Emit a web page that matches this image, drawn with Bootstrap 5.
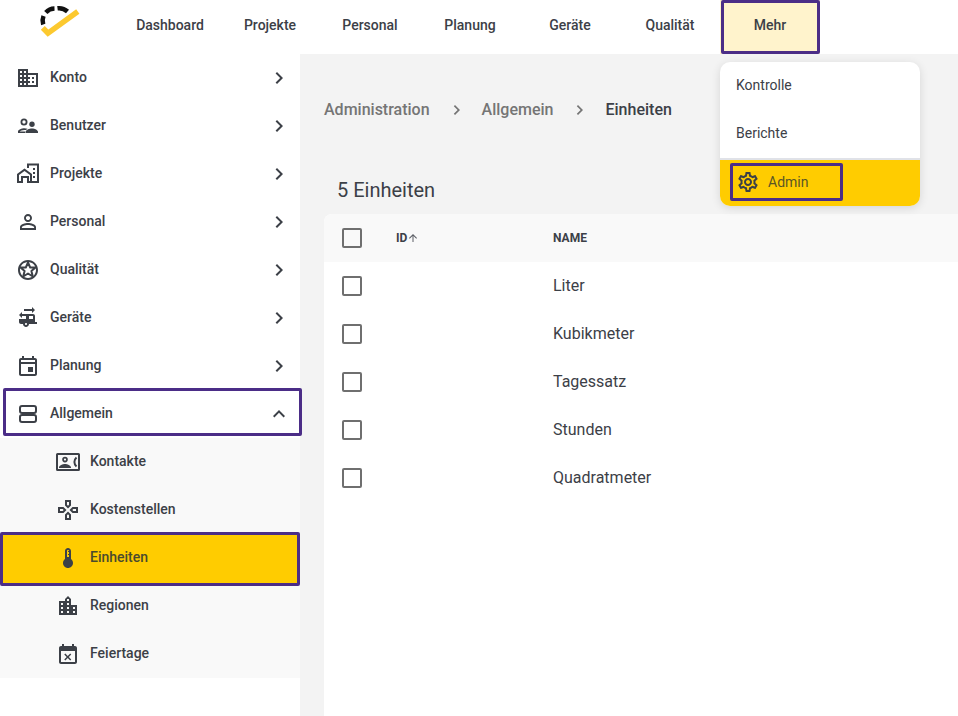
<!DOCTYPE html>
<html lang="de">
<head>
<meta charset="utf-8">
<title>Einheiten</title>
<link href="https://cdn.jsdelivr.net/npm/bootstrap@5.3.0/dist/css/bootstrap.min.css" rel="stylesheet">
<style>
html,body{height:716px;overflow:hidden}
body{font-family:Roboto,"Liberation Sans",sans-serif;color:#3c4047;background:#f3f3f3;font-size:14px}
svg.ico{fill:#3c4047;display:block;flex:none}
.topbar{height:54px;background:#fff;position:relative}
.logo-cell{width:120px;flex:none}
.top-link{width:100px;height:54px;padding-bottom:4px;font-size:14px;font-weight:500;color:#3c4047;text-decoration:none;position:relative}
.top-link.is-open{background:#fff3cc}
.top-link.is-open::after{content:"";position:absolute;left:1px;right:0;top:0;bottom:0;border:3px solid #4b2d87;border-radius:2px}
.shell{height:662px}
.side{width:300px;flex:none;background:#fff}
.side-row{height:48px;padding-left:18px;padding-right:9px;font-weight:500;font-size:14px;color:#3c4047;text-decoration:none;position:relative}
.side-row .lbl{margin-left:12px;margin-top:-2px}
.side-row .chev{margin-left:auto}
.sub-list{background:#f9f9f9}
.side-sub{padding-left:56px}
.side-sub .lbl{margin-left:10px}
.is-focus::after{content:"";position:absolute;left:3px;right:-2px;top:-2px;bottom:2px;border:3px solid #4b2d87;border-radius:2px}
.is-current::after{content:"";position:absolute;left:0;right:0;top:-2px;bottom:-4px;background:#ffcc00;border:3px solid #4b2d87;border-radius:2px}
.is-current svg,.is-current .lbl{position:relative;z-index:1}
.is-current .lbl{color:#4a4a2e}
.main-pane{flex:1;min-width:0;padding-left:24px}
.crumbs{height:110px;padding-top:2px;font-size:16px;font-weight:500;color:#757575}
.crumbs .here{color:#3c4047}
.crumb-sep{fill:#757575;margin:0 13px 0 15px;display:block;flex:none}
.count-title{height:50px;padding-left:13px;padding-top:14px;font-size:20px;font-weight:400;color:#3c4047;margin:0;line-height:24px}
.data-panel{background:#fff;border-top-left-radius:8px;height:502px}
.data-head{height:48px;background:#f9f9f9;border-top-left-radius:8px;font-size:12px;font-weight:700}
.data-row{height:48px;font-size:16px}
.box-cell{width:72px;padding-left:18px;flex:none}
.tick{width:20px;height:20px;border:2px solid #6f6f6f;border-radius:2px;display:block}
.id-cell{width:157px;flex:none}
.sort-arrow{fill:#5c5f66}
.more-menu{position:absolute;left:720px;top:62px;width:200px;background:#fff;border-radius:10px;box-shadow:0 2px 10px rgba(0,0,0,.12);z-index:5}
.more-item{height:48px;padding-left:16px;padding-bottom:2px;font-size:14px;color:#3c4047;text-decoration:none}
.more-admin{height:48px;background:#ffcc00;border-top:2px solid #e0e2e8;border-radius:0 0 10px 10px;color:#5a5526;position:relative;padding-left:16px;padding-bottom:2px;text-decoration:none;font-size:14px}
.more-admin .lbl{margin-left:8px}
.more-admin::after{content:"";position:absolute;left:10px;top:3px;width:113px;height:38px;border:3px solid #4b2d87;border-radius:2px}
.logo-arc{fill:none;stroke:#111;stroke-width:4.500}
.logo-tick{fill:none;stroke:#fcc92f;stroke-width:5.500}
.line-ico{fill:none;stroke:#3c4047;stroke-width:2;stroke-linejoin:round}
.logo-svg{display:block}
</style>
</head>
<body>
<nav class="topbar d-flex align-items-center">
  <div class="logo-cell d-flex justify-content-center">
    <svg class="logo-svg" width="120" height="54" viewBox="0 0 120 54">
      <path class="logo-arc" d="M43.200 24.500A12.500 12.500 0 0 1 43.500 16"/>
      <path class="logo-arc" d="M45.800 12.500A12.500 12.500 0 0 1 54.500 8.600"/>
      <path class="logo-arc" d="M57.500 8.300A12.500 12.500 0 0 1 67.500 11.500"/>
      <path class="logo-tick" d="M42.800 27.800L48 33.200L77.800 11.500"/>
    </svg>
  </div>
  <a class="top-link d-flex align-items-center justify-content-center" href="#">Dashboard</a>
  <a class="top-link d-flex align-items-center justify-content-center" href="#">Projekte</a>
  <a class="top-link d-flex align-items-center justify-content-center" href="#">Personal</a>
  <a class="top-link d-flex align-items-center justify-content-center" href="#">Planung</a>
  <a class="top-link d-flex align-items-center justify-content-center" href="#">Geräte</a>
  <a class="top-link d-flex align-items-center justify-content-center" href="#">Qualität</a>
  <a class="top-link is-open d-flex align-items-center justify-content-center" href="#">Mehr</a>
</nav>

<div class="shell d-flex">
  <aside class="side">
    <a class="side-row d-flex align-items-center" href="#">
      <svg class="ico" width="20" height="24" viewBox="2 0 20 24"><path d="M12 7V3H2v18h20V7H12zM6 19H4v-2h2v2zm0-4H4v-2h2v2zm0-4H4V9h2v2zm0-4H4V5h2v2zm4 12H8v-2h2v2zm0-4H8v-2h2v2zm0-4H8V9h2v2zm0-4H8V5h2v2zm10 12h-8v-2h2v-2h-2v-2h2v-2h-2V9h8v10zm-2-8h-2v2h2v-2zm0 4h-2v2h2v-2z"/></svg>
      <span class="lbl">Konto</span>
      <svg class="ico chev" width="24" height="24" viewBox="0 0 24 24"><path d="M10 6L8.590 7.410 13.170 12l-4.580 4.590L10 18l6-6z"/></svg>
    </a>
    <a class="side-row d-flex align-items-center" href="#">
      <svg class="ico" width="20" height="24" viewBox="0 0 20 24"><path fill-rule="evenodd" d="M6 4.500a3.500 3.500 0 1 1 0 7 3.500 3.500 0 0 1 0-7zm0 1.800a1.700 1.700 0 1 0 0 3.400 1.700 1.700 0 0 0 0-3.400z"/><circle cx="14" cy="10.300" r="2.700"/><path d="M0 19v-1.500c0-1.700 3.600-3.200 6.500-3.200 1 0 2 .2 3 .5L8 16.100c-.5-.1-1-.2-1.500-.2-2 0-4.300.8-4.700 1.500H7V19z"/><path d="M7.500 19v-1c0-1.900 3.800-3.500 6.500-3.500s6 1.600 6 3.500v1z"/></svg>
      <span class="lbl">Benutzer</span>
      <svg class="ico chev" width="24" height="24" viewBox="0 0 24 24"><path d="M10 6L8.590 7.410 13.170 12l-4.580 4.590L10 18l6-6z"/></svg>
    </a>
    <a class="side-row d-flex align-items-center" href="#">
      <svg class="ico" width="22" height="24" viewBox="0 0 22 24" style="margin-left:-1px;margin-right:-1px"><path fill-rule="evenodd" d="M10 1.500h12V21h-7v-2h5V3.500h-8V6h-2zM7.500 6.500L15 12v9h-5v-5H6v5H0v-9zM7.500 9L2 13v6h2v-5h8v5h1v-6z"/><path d="M16 6h2v2h-2zM16 10h2v2h-2zM16 14h2v2h-2z"/></svg>
      <span class="lbl">Projekte</span>
      <svg class="ico chev" width="24" height="24" viewBox="0 0 24 24"><path d="M10 6L8.590 7.410 13.170 12l-4.580 4.590L10 18l6-6z"/></svg>
    </a>
    <a class="side-row d-flex align-items-center" href="#">
      <svg class="ico" width="20" height="24" viewBox="2 0 20 24"><path d="M12 5.900c1.160 0 2.100.94 2.100 2.100s-.94 2.100-2.100 2.100S9.900 9.160 9.900 8s.94-2.100 2.100-2.100m0 9c2.970 0 6.100 1.460 6.100 2.100v1.100H5.900V17c0-.64 3.130-2.100 6.100-2.100M12 4C9.790 4 8 5.790 8 8s1.790 4 4 4 4-1.790 4-4-1.790-4-4-4zm0 9c-2.670 0-8 1.340-8 4v3h16v-3c0-2.660-5.330-4-8-4z"/></svg>
      <span class="lbl">Personal</span>
      <svg class="ico chev" width="24" height="24" viewBox="0 0 24 24"><path d="M10 6L8.590 7.410 13.170 12l-4.580 4.590L10 18l6-6z"/></svg>
    </a>
    <a class="side-row d-flex align-items-center" href="#">
      <svg class="ico" width="20" height="24" viewBox="2 0 20 24"><path d="M11.990 2C6.470 2 2 6.480 2 12s4.470 10 9.990 10C17.520 22 22 17.520 22 12S17.520 2 11.990 2zM12 20c-4.420 0-8-3.580-8-8s3.580-8 8-8 8 3.580 8 8-3.580 8-8 8z"/><path class="line-ico" d="M12 4.500l2.200 5h5.300l-4.100 3.600 1.400 5.400-4.800-3-4.800 3 1.400-5.400-4.100-3.600h5.300z"/></svg>
      <span class="lbl">Qualität</span>
      <svg class="ico chev" width="24" height="24" viewBox="0 0 24 24"><path d="M10 6L8.590 7.410 13.170 12l-4.580 4.590L10 18l6-6z"/></svg>
    </a>
    <a class="side-row d-flex align-items-center" href="#">
      <svg class="ico" width="20" height="24" viewBox="3 1 20 24"><path d="M20 17v-6c0-1.100-.9-2-2-2H7V7l-3 3 3 3v-2h4v3H4v3c0 1.100.9 2 2 2h2c0 1.660 1.340 3 3 3s3-1.340 3-3h8v-2h-2zm-9 3c-.55 0-1-.45-1-1s.45-1 1-1 1 .45 1 1-.45 1-1 1zm7-6h-4v-3h4v3zM17 2v2H9v2h8v2l3-3z"/></svg>
      <span class="lbl">Geräte</span>
      <svg class="ico chev" width="24" height="24" viewBox="0 0 24 24"><path d="M10 6L8.590 7.410 13.170 12l-4.580 4.590L10 18l6-6z"/></svg>
    </a>
    <a class="side-row d-flex align-items-center" href="#">
      <svg class="ico" width="20" height="24" viewBox="2 0 20 24"><path d="M19 4h-1V2h-2v2H8V2H6v2H5c-1.110 0-1.990.9-1.990 2L3 20c0 1.100.89 2 2 2h14c1.100 0 2-.9 2-2V6c0-1.100-.9-2-2-2zm0 16H5V10h14v10zm0-12H5V6h14v2zm-7 5h5v5h-5z"/></svg>
      <span class="lbl">Planung</span>
      <svg class="ico chev" width="24" height="24" viewBox="0 0 24 24"><path d="M10 6L8.590 7.410 13.170 12l-4.580 4.590L10 18l6-6z"/></svg>
    </a>
    <a class="side-row is-focus d-flex align-items-center" href="#">
      <svg class="ico" width="20" height="24" viewBox="2 0 20 24"><rect class="line-ico" x="4" y="4" width="16" height="7" rx="2"/><rect class="line-ico" x="4" y="13" width="16" height="7" rx="2"/></svg>
      <span class="lbl">Allgemein</span>
      <svg class="ico chev" width="24" height="24" viewBox="0 0 24 24"><path d="M12 8l-6 6 1.410 1.410L12 10.830l4.590 4.580L18 14z"/></svg>
    </a>
    <div class="sub-list">
      <a class="side-row side-sub d-flex align-items-center" href="#">
        <svg class="ico" width="24" height="24" viewBox="0 0 24 24"><path fill-rule="evenodd" d="M1.500 3h21A1.500 1.500 0 0 1 24 4.500v15a1.500 1.500 0 0 1-1.500 1.500h-21A1.500 1.500 0 0 1 0 19.500v-15A1.500 1.500 0 0 1 1.500 3zM2 5v14h20V5z"/><path fill-rule="evenodd" d="M9 6.800a2.800 2.800 0 1 1 0 5.600 2.800 2.800 0 0 1 0-5.600zm0 1.700a1.100 1.100 0 1 0 0 2.200 1.100 1.100 0 0 0 0-2.200zM3 17.500c0-2.200 3.900-3.500 6-3.500s6 1.300 6 3.500v.5H3z"/><path class="line-ico" d="M20.500 7.500c-2.800 2.500-2.800 6.500 0 9"/></svg>
        <span class="lbl">Kontakte</span>
      </a>
      <a class="side-row side-sub d-flex align-items-center" href="#">
        <svg class="ico" width="24" height="24" viewBox="0 0 24 24"><path d="M13 4v2.670l-1 1-1-1V4h2m7 7v2h-2.670l-1-1 1-1H20M6.670 11l1 1-1 1H4v-2h2.670M12 16.330l1 1V20h-2v-2.670l1-1M15 2H9v5.500l3 3 3-3V2zm7 7h-5.500l-3 3 3 3H22V9zM7.500 9H2v6h5.500l3-3-3-3zm4.500 4.500l-3 3V22h6v-5.500l-3-3z"/></svg>
        <span class="lbl">Kostenstellen</span>
      </a>
      <a class="side-row side-sub is-current d-flex align-items-center" href="#">
        <svg class="ico" width="24" height="24" viewBox="0 0 24 24"><path d="M15 13V5c0-1.660-1.340-3-3-3S9 3.340 9 5v8c-1.210.91-2 2.370-2 4 0 2.760 2.240 5 5 5s5-2.240 5-5c0-1.630-.79-3.090-2-4zm-4-8c0-.55.45-1 1-1s1 .45 1 1h-1v1h1v2h-1v1h1v2h-2V5z"/></svg>
        <span class="lbl">Einheiten</span>
      </a>
      <a class="side-row side-sub d-flex align-items-center" href="#">
        <svg class="ico" width="24" height="24" viewBox="0 0 24 24"><path d="M15 11V5l-3-3-3 3v2H3v14h18V11h-6zm-8 8H5v-2h2v2zm0-4H5v-2h2v2zm0-4H5V9h2v2zm6 8h-2v-2h2v2zm0-4h-2v-2h2v2zm0-4h-2V9h2v2zm0-4h-2V5h2v2zm6 12h-2v-2h2v2zm0-4h-2v-2h2v2z"/></svg>
        <span class="lbl">Regionen</span>
      </a>
      <a class="side-row side-sub d-flex align-items-center" href="#">
        <svg class="ico" width="24" height="24" viewBox="0 0 24 24"><path d="M9.310 18.500l2.440-2.440 2.440 2.440 1.060-1.060-2.440-2.440 2.440-2.440-1.060-1.060-2.440 2.440-2.440-2.440-1.060 1.060L10.690 15l-2.440 2.440zM19 4h-1V2h-2v2H8V2H6v2H5c-1.110 0-1.990.9-1.990 2L3 20c0 1.100.89 2 2 2h14c1.100 0 2-.9 2-2V6c0-1.100-.9-2-2-2zm0 16H5V9h14v11z"/></svg>
        <span class="lbl">Feiertage</span>
      </a>
    </div>
  </aside>

  <main class="main-pane">
    <div class="crumbs d-flex align-items-center">
      <span>Administration</span>
      <svg class="crumb-sep" width="24" height="24" viewBox="0 0 24 24"><path d="M10 7L8.800 8.200 12.600 12l-3.800 3.800L10 17l5-5z"/></svg>
      <span>Allgemein</span>
      <svg class="crumb-sep" width="24" height="24" viewBox="0 0 24 24"><path d="M10 7L8.800 8.200 12.600 12l-3.800 3.800L10 17l5-5z"/></svg>
      <span class="here">Einheiten</span>
    </div>
    <h1 class="count-title">5 Einheiten</h1>
    <section class="data-panel">
      <div class="data-head d-flex align-items-center">
        <div class="box-cell"><span class="tick"></span></div>
        <div class="id-cell d-flex align-items-center">ID<svg class="sort-arrow" width="12" height="12" viewBox="0 0 24 24"><path d="M4 12l1.410 1.410L11 7.830V20h2V7.830l5.580 5.590L20 12l-8-8z"/></svg></div>
        <div>NAME</div>
      </div>
      <div class="data-row d-flex align-items-center"><div class="box-cell"><span class="tick"></span></div><div class="id-cell"></div><div>Liter</div></div>
      <div class="data-row d-flex align-items-center"><div class="box-cell"><span class="tick"></span></div><div class="id-cell"></div><div>Kubikmeter</div></div>
      <div class="data-row d-flex align-items-center"><div class="box-cell"><span class="tick"></span></div><div class="id-cell"></div><div>Tagessatz</div></div>
      <div class="data-row d-flex align-items-center"><div class="box-cell"><span class="tick"></span></div><div class="id-cell"></div><div>Stunden</div></div>
      <div class="data-row d-flex align-items-center"><div class="box-cell"><span class="tick"></span></div><div class="id-cell"></div><div>Quadratmeter</div></div>
    </section>
  </main>
</div>

<div class="more-menu">
  <a class="more-item d-flex align-items-center" href="#">Kontrolle</a>
  <a class="more-item d-flex align-items-center" href="#">Berichte</a>
  <a class="more-admin d-flex align-items-center" href="#">
    <svg class="ico" width="24" height="24" viewBox="0 0 24 24"><path d="M19.430 12.980c.04-.32.07-.64.07-.98 0-.34-.03-.66-.07-.98l2.110-1.650c.19-.15.24-.42.12-.64l-2-3.460c-.09-.16-.26-.25-.44-.25-.06 0-.12.01-.17.03l-2.490 1c-.52-.4-1.080-.73-1.690-.98l-.38-2.650C14.460 2.180 14.250 2 14 2h-4c-.25 0-.46.18-.49.42l-.38 2.650c-.61.25-1.170.59-1.690.98l-2.490-1c-.06-.02-.12-.03-.18-.03-.17 0-.34.09-.43.25l-2 3.460c-.13.22-.07.49.12.64l2.110 1.650c-.04.32-.07.65-.07.98 0 .33.03.66.07.98l-2.110 1.650c-.19.15-.24.42-.12.64l2 3.460c.09.16.26.25.44.25.06 0 .12-.01.17-.03l2.490-1c.52.4 1.080.73 1.690.98l.38 2.650c.03.24.24.42.49.42h4c.25 0 .46-.18.49-.42l.38-2.650c.61-.25 1.170-.59 1.690-.98l2.490 1c.06.02.12.03.18.03.17 0 .34-.09.43-.25l2-3.460c.12-.22.07-.49-.12-.64l-2.110-1.650zm-1.980-1.710c.04.31.05.52.05.73 0 .21-.02.43-.05.73l-.14 1.130.89.7 1.080.84-.7 1.210-1.270-.51-1.040-.42-.9.68c-.43.32-.84.56-1.250.73l-1.060.43-.16 1.130-.2 1.350h-1.400l-.19-1.350-.16-1.130-1.060-.43c-.43-.18-.83-.41-1.230-.71l-.91-.7-1.060.43-1.270.51-.7-1.210 1.080-.84.89-.7-.14-1.130c-.03-.31-.05-.54-.05-.74s.02-.43.05-.73l.14-1.130-.89-.7-1.080-.84.7-1.210 1.270.51 1.040.42.9-.68c.43-.32.84-.56 1.250-.73l1.060-.43.16-1.130.2-1.350h1.390l.19 1.350.16 1.130 1.060.43c.43.18.83.41 1.230.71l.91.7 1.060-.43 1.270-.51.7 1.210-1.070.85-.89.7.14 1.130zM12 8c-2.210 0-4 1.790-4 4s1.790 4 4 4 4-1.790 4-4-1.790-4-4-4zm0 6c-1.100 0-2-.9-2-2s.9-2 2-2 2 .9 2 2-.9 2-2 2z"/></svg>
    <span class="lbl">Admin</span>
  </a>
</div>
<script src="https://cdn.jsdelivr.net/npm/bootstrap@5.3.0/dist/js/bootstrap.bundle.min.js"></script>
</body>
</html>
